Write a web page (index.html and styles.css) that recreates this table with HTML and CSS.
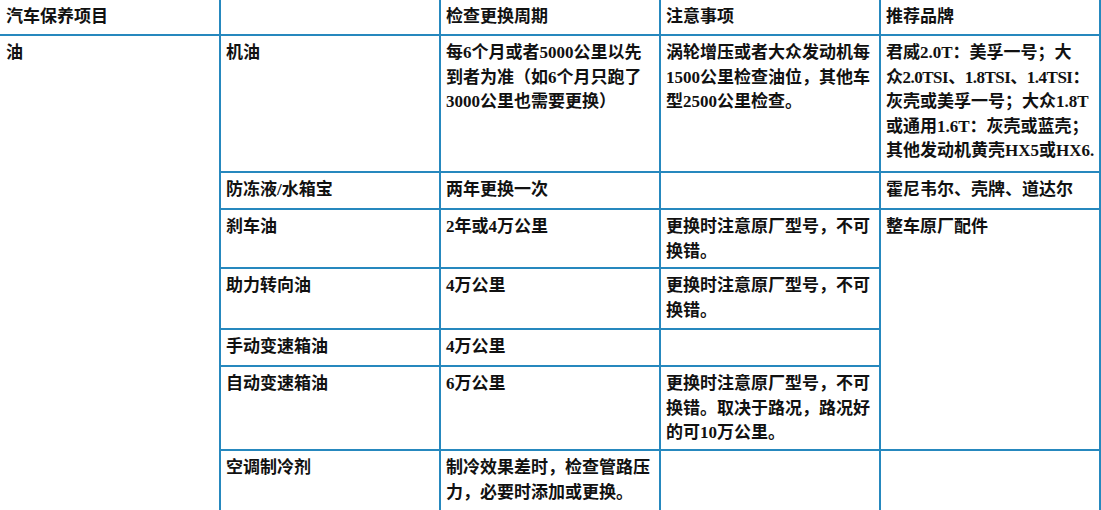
FILE: index.html
```html
<!DOCTYPE html>
<html lang="zh-CN">
<head>
<meta charset="utf-8">
<title>汽车保养项目</title>
<link rel="stylesheet" href="styles.css">
</head>
<body>
<table class="care">
  <colgroup>
    <col class="c1"><col class="c2"><col class="c3"><col class="c4"><col class="c5">
  </colgroup>
  <tr class="r-head">
    <td class="first">汽车保养项目</td>
    <td></td>
    <td>检查更换周期</td>
    <td>注意事项</td>
    <td>推荐品牌</td>
  </tr>
  <tr class="r-oil">
    <td class="first" rowspan="7">油</td>
    <td>机油</td>
    <td>每6个月或者5000公里以先<br>到者为准（如6个月只跑了<br>3000公里也需要更换）</td>
    <td>涡轮增压或者大众发动机每<br>1500公里检查油位，其他车<br>型2500公里检查。</td>
    <td>君威2.0T：美孚一号；大<br><span class="tight">众2.0TSI、1.8TSI、1.4TSI：</span><br>灰壳或美孚一号；大众1.8T<br>或通用1.6T：灰壳或蓝壳；<br>其他发动机黄壳HX5或HX6.</td>
  </tr>
  <tr class="r-one">
    <td>防冻液/水箱宝</td>
    <td>两年更换一次</td>
    <td></td>
    <td>霍尼韦尔、壳牌、道达尔</td>
  </tr>
  <tr class="r-brake">
    <td>刹车油</td>
    <td>2年或4万公里</td>
    <td>更换时注意原厂型号，不可<br>换错。</td>
    <td rowspan="4">整车原厂配件</td>
  </tr>
  <tr class="r-steer">
    <td>助力转向油</td>
    <td>4万公里</td>
    <td>更换时注意原厂型号，不可<br>换错。</td>
  </tr>
  <tr class="r-one">
    <td>手动变速箱油</td>
    <td>4万公里</td>
    <td></td>
  </tr>
  <tr class="r-auto">
    <td>自动变速箱油</td>
    <td>6万公里</td>
    <td>更换时注意原厂型号，不可<br>换错。取决于路况，路况好<br>的可10万公里。</td>
  </tr>
  <tr class="r-ac">
    <td>空调制冷剂</td>
    <td>制冷效果差时，检查管路压<br>力，必要时添加或更换。</td>
    <td></td>
    <td></td>
  </tr>
</table>
</body>
</html>
```

FILE: styles.css
```css
html, body {
  margin: 0;
  padding: 0;
  background: #ffffff;
}

.care {
  border-collapse: separate;
  border-spacing: 0;
  table-layout: fixed;
  width: 1101px;
  font-family: "Liberation Serif", "Noto Sans CJK SC", serif;
  font-size: 17px;
  font-weight: bold;
  color: #111111;
  line-height: 24.5px;
}

.c1 { width: 221px; }
.c2, .c3, .c4, .c5 { width: 220px; }

.care td {
  vertical-align: top;
  white-space: nowrap;
  padding: 5px 4px 3px 5px;
  border-right: 2px solid #2688be;
  border-bottom: 2px solid #2688be;
  overflow: visible;
}

.care td.first {
  padding-left: 6px;
}

.r-head { height: 36px; }
.r-oil { height: 137px; }
.r-one { height: 37px; }
.r-brake { height: 59px; }
.r-steer { height: 61px; }
.r-auto { height: 84px; }
.r-ac { height: 90px; }

.tight {
  letter-spacing: -0.5px;
}
```
